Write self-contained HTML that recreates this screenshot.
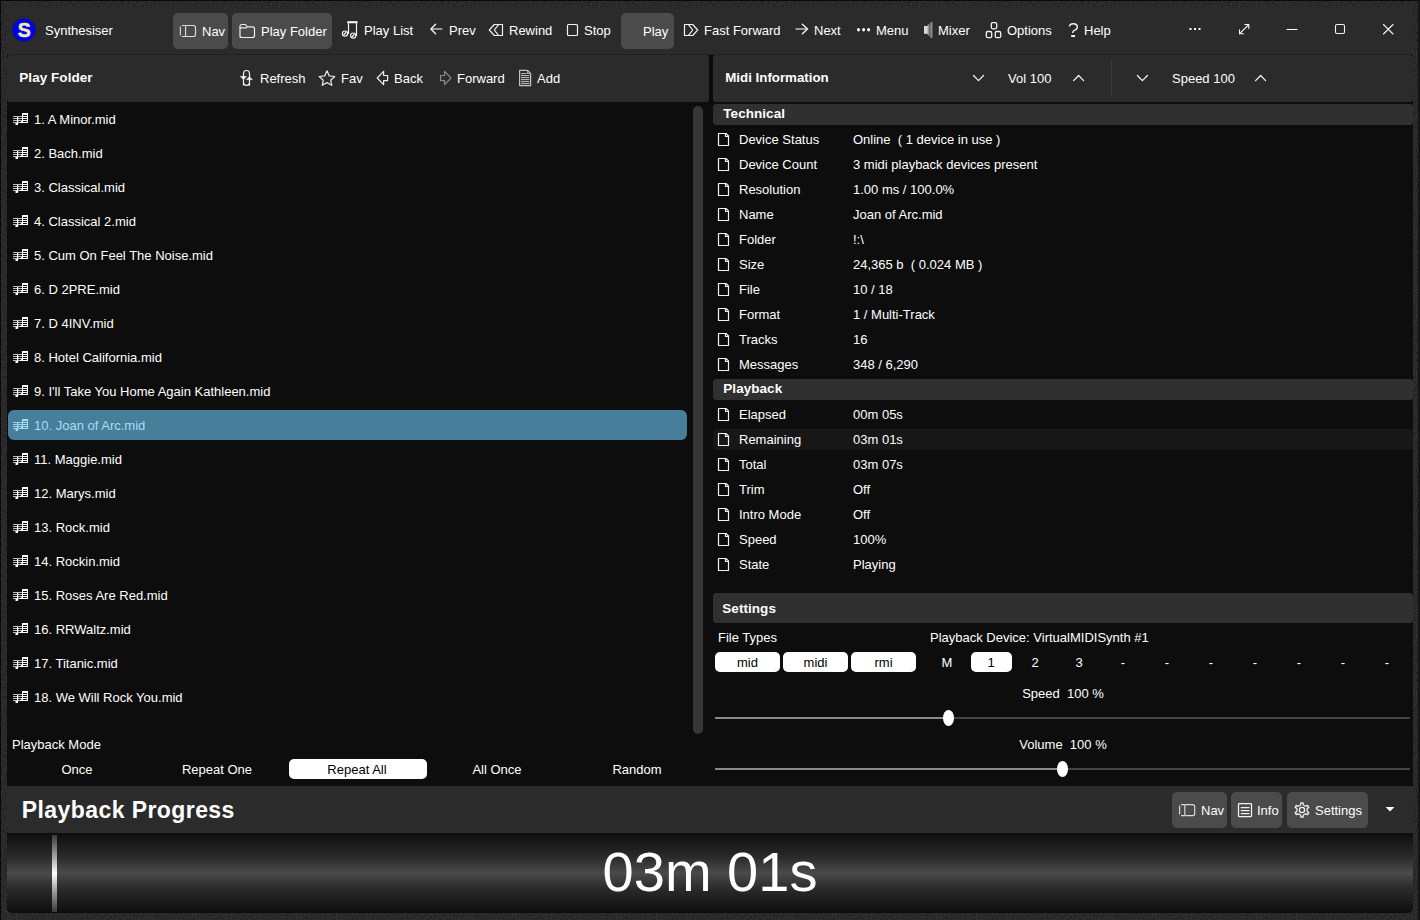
<!DOCTYPE html>
<html><head><meta charset="utf-8"><style>
html,body{margin:0;padding:0;background:#1d1d1d;}
body{width:1420px;height:920px;position:relative;overflow:hidden;font-family:"Liberation Sans", sans-serif;}
.t{position:absolute;white-space:nowrap;}
.b{position:absolute;}
.s{position:absolute;overflow:visible;}
</style></head><body>
<div class="b" style="left:0px;top:0px;width:1420px;height:920px;background:#262626;"></div>
<svg class="s" style="left:0;top:0" width="1420" height="920"><filter id="nz" x="0" y="0" width="100%" height="100%" color-interpolation-filters="sRGB"><feTurbulence type="fractalNoise" baseFrequency="0.8" numOctaves="1" seed="3"/><feColorMatrix values="0.22 0 0 0 0.055  0.22 0 0 0 0.055  0.22 0 0 0 0.055  0 0 0 0 1"/></filter><rect width="1420" height="920" filter="url(#nz)"/></svg>
<div class="b" style="left:0px;top:0px;width:1420px;height:1px;background:#0a0a0a;"></div>
<div class="b" style="left:0px;top:0px;width:1px;height:920px;background:#0a0a0a;"></div>
<div class="b" style="left:1418px;top:0px;width:2px;height:920px;background:#141414;"></div>
<div class="b" style="left:7px;top:7px;width:1406px;height:906px;background:#2b2b2b;"></div>
<div class="b" style="left:7px;top:54px;width:1406px;height:1px;background:#212121;"></div>
<div class="b" style="left:13.1px;top:18.6px;width:22px;height:22px;border-radius:50%;background:radial-gradient(circle,#0000f4 50%,#0000d0 85%,#0000a0 100%);box-shadow:0 0 1.5px 0.8px rgba(0,0,170,0.7);"></div>
<div class="t" style="left:17.8px;top:19.19px;font-size:19.5px;line-height:22.5px;font-weight:bold;color:#f2eea8;-webkit-text-stroke:0.5px #f2eea8;">S</div>
<div class="t" style="left:45px;top:22.50px;font-size:13px;line-height:16px;font-weight:normal;color:#fff;letter-spacing:0px;">Synthesiser</div>
<div class="b" style="left:173px;top:13px;width:55px;height:36px;background:#4b4b4b;border-radius:5px;"></div>
<div class="b" style="left:232px;top:13px;width:100px;height:36px;background:#4b4b4b;border-radius:5px;"></div>
<div class="b" style="left:621px;top:13px;width:53px;height:36px;background:#4b4b4b;border-radius:5px;"></div>
<div class="t" style="left:202px;top:23.50px;font-size:13px;line-height:16px;font-weight:normal;color:#fff;letter-spacing:0px;">Nav</div>
<div class="t" style="left:261px;top:23.50px;font-size:13px;line-height:16px;font-weight:normal;color:#fff;letter-spacing:0px;">Play Folder</div>
<div class="t" style="left:364px;top:22.50px;font-size:13px;line-height:16px;font-weight:normal;color:#fff;letter-spacing:0px;">Play List</div>
<div class="t" style="left:449px;top:22.50px;font-size:13px;line-height:16px;font-weight:normal;color:#fff;letter-spacing:0px;">Prev</div>
<div class="t" style="left:509px;top:22.50px;font-size:13px;line-height:16px;font-weight:normal;color:#fff;letter-spacing:0px;">Rewind</div>
<div class="t" style="left:584px;top:22.50px;font-size:13px;line-height:16px;font-weight:normal;color:#fff;letter-spacing:0px;">Stop</div>
<div class="t" style="left:643px;top:23.50px;font-size:13px;line-height:16px;font-weight:normal;color:#fff;letter-spacing:0px;">Play</div>
<div class="t" style="left:704px;top:22.50px;font-size:13px;line-height:16px;font-weight:normal;color:#fff;letter-spacing:0px;">Fast Forward</div>
<div class="t" style="left:814px;top:22.50px;font-size:13px;line-height:16px;font-weight:normal;color:#fff;letter-spacing:0px;">Next</div>
<div class="t" style="left:876px;top:22.50px;font-size:13px;line-height:16px;font-weight:normal;color:#fff;letter-spacing:0px;">Menu</div>
<div class="t" style="left:938px;top:22.50px;font-size:13px;line-height:16px;font-weight:normal;color:#fff;letter-spacing:0px;">Mixer</div>
<div class="t" style="left:1007px;top:22.50px;font-size:13px;line-height:16px;font-weight:normal;color:#fff;letter-spacing:0px;">Options</div>
<div class="t" style="left:1084px;top:22.50px;font-size:13px;line-height:16px;font-weight:normal;color:#fff;letter-spacing:0px;">Help</div>
<div class="b" style="left:7px;top:55px;width:1406px;height:731px;background:#0d0d0d;"></div>
<div class="b" style="left:7px;top:55px;width:702px;height:47px;background:#2b2b2b;border-radius:3px;"></div>
<div class="t" style="left:19.3px;top:70.27px;font-size:13.5px;line-height:16.5px;font-weight:bold;color:#fff;letter-spacing:0.05px;">Play Folder</div>
<div class="t" style="left:260px;top:70.50px;font-size:13px;line-height:16px;font-weight:normal;color:#fff;letter-spacing:0px;">Refresh</div>
<div class="t" style="left:341px;top:70.50px;font-size:13px;line-height:16px;font-weight:normal;color:#fff;letter-spacing:0px;">Fav</div>
<div class="t" style="left:394px;top:70.50px;font-size:13px;line-height:16px;font-weight:normal;color:#fff;letter-spacing:0px;">Back</div>
<div class="t" style="left:457px;top:70.50px;font-size:13px;line-height:16px;font-weight:normal;color:#fff;letter-spacing:0px;">Forward</div>
<div class="t" style="left:537px;top:70.50px;font-size:13px;line-height:16px;font-weight:normal;color:#fff;letter-spacing:0px;">Add</div>
<div class="b" style="left:709px;top:55px;width:4px;height:731px;background:#0b0b0b;"></div>
<div class="b" style="left:713px;top:55px;width:700px;height:47px;background:#2b2b2b;border-radius:3px;"></div>
<div class="t" style="left:725.3px;top:70.44px;font-size:13.3px;line-height:16.3px;font-weight:bold;color:#fff;">Midi Information</div>
<div class="t" style="left:1008px;top:70.50px;font-size:13px;line-height:16px;font-weight:normal;color:#fff;letter-spacing:0px;">Vol 100</div>
<div class="t" style="left:1172px;top:70.50px;font-size:13px;line-height:16px;font-weight:normal;color:#fff;letter-spacing:0px;">Speed 100</div>
<div class="b" style="left:1111px;top:60px;width:1px;height:36px;background:#3a3a3a;"></div>
<div class="b" style="left:7px;top:102px;width:1406px;height:684px;background:#0d0d0d;"></div>
<div class="b" style="left:709px;top:102px;width:4px;height:2px;background:#0b0b0b;"></div>
<div class="t" style="left:34px;top:111.50px;font-size:13px;line-height:16px;font-weight:normal;color:#fff;letter-spacing:0px;">1. A Minor.mid</div>
<div class="t" style="left:34px;top:145.50px;font-size:13px;line-height:16px;font-weight:normal;color:#fff;letter-spacing:0px;">2. Bach.mid</div>
<div class="t" style="left:34px;top:179.50px;font-size:13px;line-height:16px;font-weight:normal;color:#fff;letter-spacing:0px;">3. Classical.mid</div>
<div class="t" style="left:34px;top:213.50px;font-size:13px;line-height:16px;font-weight:normal;color:#fff;letter-spacing:0px;">4. Classical 2.mid</div>
<div class="t" style="left:34px;top:247.50px;font-size:13px;line-height:16px;font-weight:normal;color:#fff;letter-spacing:0px;">5. Cum On Feel The Noise.mid</div>
<div class="t" style="left:34px;top:281.50px;font-size:13px;line-height:16px;font-weight:normal;color:#fff;letter-spacing:0px;">6. D 2PRE.mid</div>
<div class="t" style="left:34px;top:315.50px;font-size:13px;line-height:16px;font-weight:normal;color:#fff;letter-spacing:0px;">7. D 4INV.mid</div>
<div class="t" style="left:34px;top:349.50px;font-size:13px;line-height:16px;font-weight:normal;color:#fff;letter-spacing:0px;">8. Hotel California.mid</div>
<div class="t" style="left:34px;top:383.50px;font-size:13px;line-height:16px;font-weight:normal;color:#fff;letter-spacing:0px;">9. I'll Take You Home Again Kathleen.mid</div>
<div class="b" style="left:8px;top:410px;width:679px;height:30px;background:#477f9b;border-radius:6px;"></div>
<div class="t" style="left:34px;top:417.50px;font-size:13px;line-height:16px;font-weight:normal;color:#a8dcf2;letter-spacing:0px;">10. Joan of Arc.mid</div>
<div class="t" style="left:34px;top:451.50px;font-size:13px;line-height:16px;font-weight:normal;color:#fff;letter-spacing:0px;">11. Maggie.mid</div>
<div class="t" style="left:34px;top:485.50px;font-size:13px;line-height:16px;font-weight:normal;color:#fff;letter-spacing:0px;">12. Marys.mid</div>
<div class="t" style="left:34px;top:519.50px;font-size:13px;line-height:16px;font-weight:normal;color:#fff;letter-spacing:0px;">13. Rock.mid</div>
<div class="t" style="left:34px;top:553.50px;font-size:13px;line-height:16px;font-weight:normal;color:#fff;letter-spacing:0px;">14. Rockin.mid</div>
<div class="t" style="left:34px;top:587.50px;font-size:13px;line-height:16px;font-weight:normal;color:#fff;letter-spacing:0px;">15. Roses Are Red.mid</div>
<div class="t" style="left:34px;top:621.50px;font-size:13px;line-height:16px;font-weight:normal;color:#fff;letter-spacing:0px;">16. RRWaltz.mid</div>
<div class="t" style="left:34px;top:655.50px;font-size:13px;line-height:16px;font-weight:normal;color:#fff;letter-spacing:0px;">17. Titanic.mid</div>
<div class="t" style="left:34px;top:689.50px;font-size:13px;line-height:16px;font-weight:normal;color:#fff;letter-spacing:0px;">18. We Will Rock You.mid</div>
<div class="b" style="left:693px;top:106px;width:10px;height:628px;background:#363636;border-radius:5px;"></div>
<div class="t" style="left:12px;top:736.50px;font-size:13px;line-height:16px;font-weight:normal;color:#fff;letter-spacing:0px;">Playback Mode</div>
<div class="t" style="left:-23.0px;width:200px;text-align:center;top:761.50px;font-size:13px;line-height:16px;font-weight:normal;color:#fff;letter-spacing:0px;">Once</div>
<div class="t" style="left:117.0px;width:200px;text-align:center;top:761.50px;font-size:13px;line-height:16px;font-weight:normal;color:#fff;letter-spacing:0px;">Repeat One</div>
<div class="b" style="left:289px;top:759px;width:138px;height:20px;background:#fff;border-radius:5px;"></div>
<div class="t" style="left:257.0px;width:200px;text-align:center;top:761.50px;font-size:13px;line-height:16px;font-weight:normal;color:#000;letter-spacing:0px;">Repeat All</div>
<div class="t" style="left:397.0px;width:200px;text-align:center;top:761.50px;font-size:13px;line-height:16px;font-weight:normal;color:#fff;letter-spacing:0px;">All Once</div>
<div class="t" style="left:537.0px;width:200px;text-align:center;top:761.50px;font-size:13px;line-height:16px;font-weight:normal;color:#fff;letter-spacing:0px;">Random</div>
<div class="b" style="left:713px;top:104px;width:699.5px;height:21px;background:#303030;border-radius:3px;"></div>
<div class="t" style="left:723.3px;top:106.07px;font-size:13.5px;line-height:16.5px;font-weight:bold;color:#fff;letter-spacing:0.05px;">Technical</div>
<div class="t" style="left:739px;top:131.50px;font-size:13px;line-height:16px;font-weight:normal;color:#fff;letter-spacing:0px;">Device Status</div>
<div class="t" style="left:853px;top:131.50px;font-size:13px;line-height:16px;font-weight:normal;color:#fff;letter-spacing:0px;">Online&nbsp; ( 1 device in use )</div>
<div class="t" style="left:739px;top:156.50px;font-size:13px;line-height:16px;font-weight:normal;color:#fff;letter-spacing:0px;">Device Count</div>
<div class="t" style="left:853px;top:156.50px;font-size:13px;line-height:16px;font-weight:normal;color:#fff;letter-spacing:0px;">3 midi playback devices present</div>
<div class="t" style="left:739px;top:181.50px;font-size:13px;line-height:16px;font-weight:normal;color:#fff;letter-spacing:0px;">Resolution</div>
<div class="t" style="left:853px;top:181.50px;font-size:13px;line-height:16px;font-weight:normal;color:#fff;letter-spacing:0px;">1.00 ms / 100.0%</div>
<div class="t" style="left:739px;top:206.50px;font-size:13px;line-height:16px;font-weight:normal;color:#fff;letter-spacing:0px;">Name</div>
<div class="t" style="left:853px;top:206.50px;font-size:13px;line-height:16px;font-weight:normal;color:#fff;letter-spacing:0px;">Joan of Arc.mid</div>
<div class="t" style="left:739px;top:231.50px;font-size:13px;line-height:16px;font-weight:normal;color:#fff;letter-spacing:0px;">Folder</div>
<div class="t" style="left:853px;top:231.50px;font-size:13px;line-height:16px;font-weight:normal;color:#fff;letter-spacing:0px;">!:\</div>
<div class="t" style="left:739px;top:256.50px;font-size:13px;line-height:16px;font-weight:normal;color:#fff;letter-spacing:0px;">Size</div>
<div class="t" style="left:853px;top:256.50px;font-size:13px;line-height:16px;font-weight:normal;color:#fff;letter-spacing:0px;">24,365 b&nbsp; ( 0.024 MB )</div>
<div class="t" style="left:739px;top:281.50px;font-size:13px;line-height:16px;font-weight:normal;color:#fff;letter-spacing:0px;">File</div>
<div class="t" style="left:853px;top:281.50px;font-size:13px;line-height:16px;font-weight:normal;color:#fff;letter-spacing:0px;">10 / 18</div>
<div class="t" style="left:739px;top:306.50px;font-size:13px;line-height:16px;font-weight:normal;color:#fff;letter-spacing:0px;">Format</div>
<div class="t" style="left:853px;top:306.50px;font-size:13px;line-height:16px;font-weight:normal;color:#fff;letter-spacing:0px;">1 / Multi-Track</div>
<div class="t" style="left:739px;top:331.50px;font-size:13px;line-height:16px;font-weight:normal;color:#fff;letter-spacing:0px;">Tracks</div>
<div class="t" style="left:853px;top:331.50px;font-size:13px;line-height:16px;font-weight:normal;color:#fff;letter-spacing:0px;">16</div>
<div class="t" style="left:739px;top:356.50px;font-size:13px;line-height:16px;font-weight:normal;color:#fff;letter-spacing:0px;">Messages</div>
<div class="t" style="left:853px;top:356.50px;font-size:13px;line-height:16px;font-weight:normal;color:#fff;letter-spacing:0px;">348 / 6,290</div>
<div class="b" style="left:713px;top:379px;width:699.5px;height:21px;background:#303030;border-radius:3px;"></div>
<div class="t" style="left:723.3px;top:381.07px;font-size:13.5px;line-height:16.5px;font-weight:bold;color:#fff;letter-spacing:0.05px;">Playback</div>
<div class="t" style="left:739px;top:406.50px;font-size:13px;line-height:16px;font-weight:normal;color:#fff;letter-spacing:0px;">Elapsed</div>
<div class="t" style="left:853px;top:406.50px;font-size:13px;line-height:16px;font-weight:normal;color:#fff;letter-spacing:0px;">00m 05s</div>
<div class="b" style="left:713px;top:429px;width:699.5px;height:21px;background:#171717;border-radius:3px;"></div>
<div class="t" style="left:739px;top:431.50px;font-size:13px;line-height:16px;font-weight:normal;color:#fff;letter-spacing:0px;">Remaining</div>
<div class="t" style="left:853px;top:431.50px;font-size:13px;line-height:16px;font-weight:normal;color:#fff;letter-spacing:0px;">03m 01s</div>
<div class="t" style="left:739px;top:456.50px;font-size:13px;line-height:16px;font-weight:normal;color:#fff;letter-spacing:0px;">Total</div>
<div class="t" style="left:853px;top:456.50px;font-size:13px;line-height:16px;font-weight:normal;color:#fff;letter-spacing:0px;">03m 07s</div>
<div class="t" style="left:739px;top:481.50px;font-size:13px;line-height:16px;font-weight:normal;color:#fff;letter-spacing:0px;">Trim</div>
<div class="t" style="left:853px;top:481.50px;font-size:13px;line-height:16px;font-weight:normal;color:#fff;letter-spacing:0px;">Off</div>
<div class="t" style="left:739px;top:506.50px;font-size:13px;line-height:16px;font-weight:normal;color:#fff;letter-spacing:0px;">Intro Mode</div>
<div class="t" style="left:853px;top:506.50px;font-size:13px;line-height:16px;font-weight:normal;color:#fff;letter-spacing:0px;">Off</div>
<div class="t" style="left:739px;top:531.50px;font-size:13px;line-height:16px;font-weight:normal;color:#fff;letter-spacing:0px;">Speed</div>
<div class="t" style="left:853px;top:531.50px;font-size:13px;line-height:16px;font-weight:normal;color:#fff;letter-spacing:0px;">100%</div>
<div class="t" style="left:739px;top:556.50px;font-size:13px;line-height:16px;font-weight:normal;color:#fff;letter-spacing:0px;">State</div>
<div class="t" style="left:853px;top:556.50px;font-size:13px;line-height:16px;font-weight:normal;color:#fff;letter-spacing:0px;">Playing</div>
<div class="b" style="left:713px;top:593px;width:699.5px;height:30px;background:#303030;border-radius:3px;"></div>
<div class="t" style="left:722.3px;top:600.57px;font-size:13.5px;line-height:16.5px;font-weight:bold;color:#fff;letter-spacing:0.05px;">Settings</div>

<div class="t" style="left:718px;top:629.50px;font-size:13px;line-height:16px;font-weight:normal;color:#fff;letter-spacing:0px;">File Types</div>
<div class="b" style="left:715px;top:652px;width:65px;height:20px;background:#fff;border-radius:5px;"></div>
<div class="t" style="left:647.5px;width:200px;text-align:center;top:654.50px;font-size:13px;line-height:16px;font-weight:normal;color:#000;letter-spacing:0px;">mid</div>
<div class="b" style="left:783px;top:652px;width:65px;height:20px;background:#fff;border-radius:5px;"></div>
<div class="t" style="left:715.5px;width:200px;text-align:center;top:654.50px;font-size:13px;line-height:16px;font-weight:normal;color:#000;letter-spacing:0px;">midi</div>
<div class="b" style="left:851px;top:652px;width:65px;height:20px;background:#fff;border-radius:5px;"></div>
<div class="t" style="left:783.5px;width:200px;text-align:center;top:654.50px;font-size:13px;line-height:16px;font-weight:normal;color:#000;letter-spacing:0px;">rmi</div>
<div class="t" style="left:930px;top:629.50px;font-size:13px;line-height:16px;font-weight:normal;color:#fff;letter-spacing:0px;">Playback Device: VirtualMIDISynth #1</div>
<div class="t" style="left:847.0px;width:200px;text-align:center;top:654.50px;font-size:13px;line-height:16px;font-weight:normal;color:#fff;letter-spacing:0px;">M</div>
<div class="b" style="left:971px;top:652px;width:41px;height:20px;background:#fff;border-radius:5px;"></div>
<div class="t" style="left:891.0px;width:200px;text-align:center;top:654.50px;font-size:13px;line-height:16px;font-weight:normal;color:#000;letter-spacing:0px;">1</div>
<div class="t" style="left:935.0px;width:200px;text-align:center;top:654.50px;font-size:13px;line-height:16px;font-weight:normal;color:#fff;letter-spacing:0px;">2</div>
<div class="t" style="left:979.0px;width:200px;text-align:center;top:654.50px;font-size:13px;line-height:16px;font-weight:normal;color:#fff;letter-spacing:0px;">3</div>
<div class="t" style="left:1023.0px;width:200px;text-align:center;top:654.50px;font-size:13px;line-height:16px;font-weight:normal;color:#fff;letter-spacing:0px;">-</div>
<div class="t" style="left:1067.0px;width:200px;text-align:center;top:654.50px;font-size:13px;line-height:16px;font-weight:normal;color:#fff;letter-spacing:0px;">-</div>
<div class="t" style="left:1111.0px;width:200px;text-align:center;top:654.50px;font-size:13px;line-height:16px;font-weight:normal;color:#fff;letter-spacing:0px;">-</div>
<div class="t" style="left:1155.0px;width:200px;text-align:center;top:654.50px;font-size:13px;line-height:16px;font-weight:normal;color:#fff;letter-spacing:0px;">-</div>
<div class="t" style="left:1199.0px;width:200px;text-align:center;top:654.50px;font-size:13px;line-height:16px;font-weight:normal;color:#fff;letter-spacing:0px;">-</div>
<div class="t" style="left:1243.0px;width:200px;text-align:center;top:654.50px;font-size:13px;line-height:16px;font-weight:normal;color:#fff;letter-spacing:0px;">-</div>
<div class="t" style="left:1287.0px;width:200px;text-align:center;top:654.50px;font-size:13px;line-height:16px;font-weight:normal;color:#fff;letter-spacing:0px;">-</div>
<div class="t" style="left:963.0px;width:200px;text-align:center;top:685.50px;font-size:13px;line-height:16px;font-weight:normal;color:#fff;letter-spacing:0px;">Speed&nbsp; 100 %</div>
<div class="b" style="left:715px;top:717px;width:233px;height:2px;background:#8a8a8a;"></div>
<div class="b" style="left:948px;top:717px;width:462px;height:2px;background:#444;"></div>
<div class="b" style="left:943px;top:710px;width:11px;height:16px;background:#fff;border-radius:50%;"></div>
<div class="t" style="left:963.0px;width:200px;text-align:center;top:736.50px;font-size:13px;line-height:16px;font-weight:normal;color:#fff;letter-spacing:0px;">Volume&nbsp; 100 %</div>
<div class="b" style="left:715px;top:768px;width:347px;height:2px;background:#8a8a8a;"></div>
<div class="b" style="left:1062px;top:768px;width:348px;height:2px;background:#444;"></div>
<div class="b" style="left:1057px;top:761px;width:11px;height:16px;background:#fff;border-radius:50%;"></div>
<div class="b" style="left:7px;top:786px;width:1406px;height:47px;background:#2b2b2b;border-radius:5px 5px 0 0;"></div>
<div class="t" style="left:21.8px;top:797.03px;font-size:23px;line-height:26px;font-weight:bold;color:#fff;letter-spacing:0.42px;">Playback Progress</div>
<div class="b" style="left:1172px;top:792px;width:55px;height:36px;background:#4b4b4b;border-radius:5px;"></div>
<div class="t" style="left:1201px;top:802.50px;font-size:13px;line-height:16px;font-weight:normal;color:#fff;letter-spacing:0px;">Nav</div>
<div class="b" style="left:1231px;top:792px;width:51px;height:36px;background:#4b4b4b;border-radius:5px;"></div>
<div class="t" style="left:1257px;top:802.50px;font-size:13px;line-height:16px;font-weight:normal;color:#fff;letter-spacing:0px;">Info</div>
<div class="b" style="left:1287px;top:792px;width:81px;height:36px;background:#4b4b4b;border-radius:5px;"></div>
<div class="t" style="left:1315px;top:802.50px;font-size:13px;line-height:16px;font-weight:normal;color:#fff;letter-spacing:0px;">Settings</div>
<div class="b" style="left:7px;top:833px;width:1406px;height:80px;background:linear-gradient(#0d0d0d,#2a2a2a 30%,#4a4a4a 50%,#2a2a2a 70%,#0d0d0d);border-radius:0 0 5px 5px;"></div>
<div class="b" style="left:52px;top:835px;width:5px;height:77px;background:linear-gradient(#3a3a3a,#aaa 30%,#fff 50%,#aaa 70%,#3a3a3a);"></div>
<div class="t" style="left:510.0px;width:400px;text-align:center;top:842.40px;font-size:56px;line-height:59px;font-weight:normal;color:#fff;">03m 01s</div>
<svg class="s" style="left:178px;top:23px" width="20" height="16" viewBox="178 23 20 16" fill="none" stroke="#dcdcdc" stroke-width="1.15" stroke-linejoin="round" stroke-linecap="round"><path d="M180.4 27.0 V34.8"/><path d="M182.20000000000002 25.5 H184.8"/><path d="M182.20000000000002 36.5 H184.8"/><path d="M185.6 25.5 V36.5"/><path d="M186.4 25.5 H193.4 Q195.5 25.5 195.5 27.6 V34.4 Q195.5 36.5 193.4 36.5 H186.4"/></svg>
<svg class="s" style="left:236px;top:20px" width="22" height="20" viewBox="236 20 22 20" fill="none" stroke="#f0f0f0" stroke-width="1.2" stroke-linejoin="round" stroke-linecap="round"><path d="M240 37 V26.5 Q240 24.5 242 24.5 H245.5 L247.3 26.8 H252.5 Q254.5 26.8 254.5 28.8 V35.5 Q254.5 37.5 252.5 37.5 H242 Q240 37.5 240 35.5"/><path d="M240.3 27.8 H246.5"/></svg>
<svg class="s" style="left:338px;top:18px" width="24" height="24" viewBox="338 18 24 24" fill="none" stroke="#f2f2f2" stroke-width="1.2" stroke-linejoin="round" stroke-linecap="round"><path d="M348.5 33.5 V22 H356.5 V35.5"/><path d="M348 22.3 H356.8" stroke-width="2"/><circle cx="345" cy="33.6" r="2.6"/><circle cx="353.2" cy="35.6" r="2.6"/><path d="M344 34.5 L346 32.5 M352.2 36.5 L354.2 34.5"/></svg>
<svg class="s" style="left:426px;top:20px" width="20" height="18" viewBox="426 20 20 18" fill="none" stroke="#f2f2f2" stroke-width="1.2" stroke-linejoin="round" stroke-linecap="round"><path d="M441.8 29 H431.5" stroke="#bdbdbd" stroke-width="1.4"/><path d="M435.6 24.3 L430.9 29 L435.6 33.7" stroke-width="1.4"/></svg>
<svg class="s" style="left:486px;top:20px" width="20" height="18" viewBox="486 20 20 18" fill="none" stroke="#f2f2f2" stroke-width="1.2" stroke-linejoin="round" stroke-linecap="round"><path d="M494.3 24.5 H502.5 V35.5 H494.3 L489.3 30 Z"/><path d="M498.3 24.8 L494.3 30 L498.3 35.2"/></svg>
<svg class="s" style="left:564px;top:20px" width="18" height="18" viewBox="564 20 18 18" fill="none" stroke="#f2f2f2" stroke-width="1.2" stroke-linejoin="round" stroke-linecap="round"><rect x="567.5" y="24.5" width="10" height="11" rx="1"/></svg>
<svg class="s" style="left:680px;top:20px" width="20" height="18" viewBox="680 20 20 18" fill="none" stroke="#f2f2f2" stroke-width="1.2" stroke-linejoin="round" stroke-linecap="round"><path d="M692.7 24.5 H684.5 V35.5 H692.7 L697.7 30 Z"/><path d="M688.7 24.8 L692.7 30 L688.7 35.2"/></svg>
<svg class="s" style="left:792px;top:20px" width="20" height="18" viewBox="792 20 20 18" fill="none" stroke="#f2f2f2" stroke-width="1.2" stroke-linejoin="round" stroke-linecap="round"><path d="M796 29 H807" stroke="#bdbdbd" stroke-width="1.4"/><path d="M802.4 24.3 L807.5 29 L802.4 33.7" stroke-width="1.4"/></svg>
<svg class="s" style="left:852px;top:24px" width="22" height="12" viewBox="852 24 22 12" fill="none" stroke="#f2f2f2" stroke-width="1.2" stroke-linejoin="round" stroke-linecap="round"><ellipse cx="858.5" cy="29.8" rx="1.5" ry="1.8" fill="#fff" stroke="none"/><ellipse cx="863.6" cy="29.8" rx="1.5" ry="1.8" fill="#fff" stroke="none"/><ellipse cx="868.6" cy="29.8" rx="1.5" ry="1.8" fill="#fff" stroke="none"/></svg>
<svg class="s" style="left:920px;top:18px" width="16" height="24" viewBox="920 18 16 24"><defs><linearGradient id="spk" x1="0" y1="0" x2="1" y2="0"><stop offset="0" stop-color="#d0d0d0"/><stop offset="0.55" stop-color="#5a5a5a"/><stop offset="1" stop-color="#b0b0b0"/></linearGradient></defs><rect x="924" y="26" width="3.2" height="7.8" fill="#d8d8d8"/><path d="M927 26 L931 22 H932.3 V38 H931 L927 33.8 Z" fill="url(#spk)"/></svg>
<svg class="s" style="left:982px;top:18px" width="22" height="24" viewBox="982 18 22 24" fill="none" stroke="#f2f2f2" stroke-width="1.3" stroke-linejoin="round" stroke-linecap="round"><rect x="991.3" y="22.6" width="5.4" height="6.2" rx="1.5"/><rect x="986.3" y="31.5" width="5.4" height="6.2" rx="1.5"/><rect x="995.3" y="31.5" width="5.4" height="6.2" rx="1.5"/></svg>
<svg class="s" style="left:1064px;top:18px" width="18" height="24" viewBox="1064 18 18 24" fill="none" stroke="#f2f2f2" stroke-width="1.2" stroke-linejoin="round" stroke-linecap="round"><path d="M1069.5 26.5 Q1069.5 23.7 1073.3 23.7 Q1077.3 23.7 1077.3 27 Q1077.3 29.3 1074.5 30.3 Q1072.6 31 1072.6 33" stroke-width="1.4" stroke-linecap="butt"/><rect x="1071.2" y="35.1" width="3.8" height="1.9" fill="#fff" stroke="none"/></svg>
<svg class="s" style="left:1186px;top:26px" width="18" height="8" viewBox="1186 26 18 8" fill="none" stroke="#f2f2f2" stroke-width="1.2" stroke-linejoin="round" stroke-linecap="round"><rect x="1189.5" y="28" width="2" height="2" fill="#fff" stroke="none"/><rect x="1194" y="28" width="2" height="2" fill="#fff" stroke="none"/><rect x="1198.5" y="28" width="2" height="2" fill="#fff" stroke="none"/></svg>
<svg class="s" style="left:1236px;top:21px" width="16" height="16" viewBox="1236 21 16 16" fill="none" stroke="#f2f2f2" stroke-width="1.1" stroke-linejoin="round" stroke-linecap="round"><path d="M1239.5 33.8 L1248.8 24.5 M1244.8 24.5 H1248.8 V28.5 M1239.5 29.8 V33.8 H1243.5"/></svg>
<svg class="s" style="left:1284px;top:26px" width="16" height="8" viewBox="1284 26 16 8" fill="none" stroke="#fff" stroke-width="1.1" stroke-linejoin="round" stroke-linecap="round"><path d="M1287 29.5 H1297"/></svg>
<svg class="s" style="left:1332px;top:21px" width="16" height="16" viewBox="1332 21 16 16" fill="none" stroke="#f2f2f2" stroke-width="1.1" stroke-linejoin="round" stroke-linecap="round"><rect x="1335.5" y="24.5" width="9" height="9" rx="1.5"/></svg>
<svg class="s" style="left:1380px;top:21px" width="16" height="16" viewBox="1380 21 16 16" fill="none" stroke="#f2f2f2" stroke-width="1.1" stroke-linejoin="round" stroke-linecap="round"><path d="M1383.5 24.5 L1393 34 M1393 24.5 L1383.5 34"/></svg>
<svg class="s" style="left:237px;top:66px" width="20" height="24" viewBox="237 66 20 24" fill="none" stroke="#f2f2f2" stroke-width="1.2" stroke-linejoin="round" stroke-linecap="round"><path d="M243.5 85 V74 Q243.5 70.5 246.5 70.5 Q249.5 70.5 249.5 74 V85.3 M243.5 82 Q243.5 85.3 246.5 85.3 Q249.5 85.3 249.5 82"/><path d="M240.6 76.6 H246.4 L243.5 79.2 Z M246.6 79.6 H252.4 L249.5 77 Z" fill="#fff" stroke-width="0.6"/></svg>
<svg class="s" style="left:316px;top:66px" width="22" height="24" viewBox="316 66 22 24" fill="none" stroke="#e6e6e6" stroke-width="1.25" stroke-linejoin="round" stroke-linecap="round"><path d="M327 70.8 L329.3 75.9 L334.8 76.5 L330.7 80.2 L331.8 85.3 L327 82.6 L322.2 85.3 L323.3 80.2 L319.2 76.5 L324.7 75.9 Z"/></svg>
<svg class="s" style="left:372px;top:66px" width="20" height="24" viewBox="372 66 20 24" fill="none" stroke="#f2f2f2" stroke-width="1.2" stroke-linejoin="round" stroke-linecap="round"><path d="M377.2 78 L383.6 71.3 V75.5 H387.6 V80.6 H383.6 V84.7 Z"/></svg>
<svg class="s" style="left:436px;top:66px" width="20" height="24" viewBox="436 66 20 24" fill="none" stroke="#8a8a8a" stroke-width="1.2" stroke-linejoin="round" stroke-linecap="round"><path d="M451 78 L444.6 71.3 V75.5 H440.6 V80.6 H444.6 V84.7 Z"/></svg>
<svg class="s" style="left:514px;top:66px" width="20" height="24" viewBox="514 66 20 24" fill="none" stroke="#f2f2f2" stroke-width="1.2" stroke-linejoin="round" stroke-linecap="round"><path d="M519.6 70.4 H527.6 L530.6 73.4 V85.6 H519.6 Z" stroke="#c4c4c4"/><path d="M527.6 70.6 V73.4 H530.4" stroke="#aaa"/><path d="M521.5 73.6 H526 M521.5 75.6 H529 M521.5 77.6 H529 M521.5 79.6 H529 M521.5 81.6 H529 M521.5 83.6 H529" stroke="#c4c4c4" stroke-width="1"/></svg>
<svg class="s" style="left:970px;top:68px" width="16" height="20" viewBox="970 68 16 20" fill="none" stroke="#f2f2f2" stroke-width="1.3" stroke-linejoin="round" stroke-linecap="round"><path d="M973.5 75.5 L978.5 80.6 L983.5 75.5"/></svg>
<svg class="s" style="left:1070px;top:68px" width="16" height="20" viewBox="1070 68 16 20" fill="none" stroke="#f2f2f2" stroke-width="1.3" stroke-linejoin="round" stroke-linecap="round"><path d="M1073.6 80.6 L1078.6 75.5 L1083.6 80.6"/></svg>
<svg class="s" style="left:1134px;top:68px" width="16" height="20" viewBox="1134 68 16 20" fill="none" stroke="#f2f2f2" stroke-width="1.3" stroke-linejoin="round" stroke-linecap="round"><path d="M1137.4 75.5 L1142.4 80.6 L1147.4 75.5"/></svg>
<svg class="s" style="left:1252px;top:68px" width="16" height="20" viewBox="1252 68 16 20" fill="none" stroke="#f2f2f2" stroke-width="1.3" stroke-linejoin="round" stroke-linecap="round"><path d="M1255.6 80.6 L1260.6 75.5 L1265.6 80.6"/></svg>
<svg class="s" style="left:1177px;top:802px" width="20" height="16" viewBox="1177 802 20 16" fill="none" stroke="#dcdcdc" stroke-width="1.15" stroke-linejoin="round" stroke-linecap="round"><path d="M1179.6 806.1 V813.9"/><path d="M1181.3999999999999 804.6 H1184.0"/><path d="M1181.3999999999999 815.6 H1184.0"/><path d="M1184.8 804.6 V815.6"/><path d="M1185.6 804.6 H1192.6 Q1194.6999999999998 804.6 1194.6999999999998 806.7 V813.5 Q1194.6999999999998 815.6 1192.6 815.6 H1185.6"/></svg>
<svg class="s" style="left:1234px;top:800px" width="22" height="20" viewBox="1234 800 22 20" fill="none" stroke="#f2f2f2" stroke-width="1.25" stroke-linejoin="round" stroke-linecap="round"><rect x="1238.5" y="803.5" width="13" height="13" rx="0.8"/><path d="M1241.2 807.5 H1249 M1241.2 810.5 H1249 M1241.2 813.5 H1249"/></svg>
<svg class="s" style="left:1292px;top:799px" width="22" height="22" viewBox="1292 799 22 22" fill="none" stroke="#f2f2f2" stroke-width="1.25" stroke-linejoin="round" stroke-linecap="round"><path d="M1299.97 805.43 L1300.74 804.54 L1300.86 802.79 L1303.14 802.79 L1303.26 804.54 L1304.03 805.43 L1304.94 805.95 L1306.10 806.18 L1307.67 805.41 L1308.82 807.38 L1307.36 808.36 L1306.97 809.48 L1306.97 810.52 L1307.36 811.64 L1308.82 812.62 L1307.67 814.59 L1306.10 813.82 L1304.94 814.05 L1304.03 814.57 L1303.26 815.46 L1303.14 817.21 L1300.86 817.21 L1300.74 815.46 L1299.97 814.57 L1299.06 814.05 L1297.90 813.82 L1296.33 814.59 L1295.18 812.62 L1296.64 811.64 L1297.03 810.52 L1297.03 809.48 L1296.64 808.36 L1295.18 807.38 L1296.33 805.41 L1297.90 806.18 L1299.06 805.95 Z"/><circle cx="1302" cy="810" r="2.6"/></svg>
<svg class="s" style="left:1380px;top:800px" width="20" height="16" viewBox="1380 800 20 16" fill="none" stroke="#f2f2f2" stroke-width="1.2" stroke-linejoin="round" stroke-linecap="round"><path d="M1385.6 806.9 H1394.4 L1390 811.6 Z" fill="#fff" stroke="none"/></svg>
<svg class="s" style="left:13px;top:113px" width="16" height="13" viewBox="13 113 16 13"><rect x="13" y="116" width="9" height="1" fill="#bdbdbd"/><rect x="13" y="118" width="9" height="1" fill="#bdbdbd"/><rect x="13" y="120" width="9" height="1" fill="#bdbdbd"/><rect x="13" y="122" width="9" height="1" fill="#bdbdbd"/><rect x="22" y="113" width="6" height="10" fill="#ffffff"/><rect x="23" y="115" width="4" height="1" fill="#0d0d0d"/><rect x="23" y="117" width="4" height="1" fill="#0d0d0d"/><rect x="23" y="119" width="4" height="1" fill="#0d0d0d"/><rect x="23" y="121" width="4" height="1" fill="#0d0d0d"/><rect x="17" y="117" width="1.2" height="7" fill="#ffffff"/><rect x="15.5" y="123" width="2.5" height="2" fill="#ffffff"/><path d="M19.5 123 L22 120.5 V123 Z" fill="#ffffff"/><path d="M25.5 123 L28 120.5 V123 Z" fill="#ffffff"/></svg>
<svg class="s" style="left:13px;top:147px" width="16" height="13" viewBox="13 147 16 13"><rect x="13" y="150" width="9" height="1" fill="#bdbdbd"/><rect x="13" y="152" width="9" height="1" fill="#bdbdbd"/><rect x="13" y="154" width="9" height="1" fill="#bdbdbd"/><rect x="13" y="156" width="9" height="1" fill="#bdbdbd"/><rect x="22" y="147" width="6" height="10" fill="#ffffff"/><rect x="23" y="149" width="4" height="1" fill="#0d0d0d"/><rect x="23" y="151" width="4" height="1" fill="#0d0d0d"/><rect x="23" y="153" width="4" height="1" fill="#0d0d0d"/><rect x="23" y="155" width="4" height="1" fill="#0d0d0d"/><rect x="17" y="151" width="1.2" height="7" fill="#ffffff"/><rect x="15.5" y="157" width="2.5" height="2" fill="#ffffff"/><path d="M19.5 157 L22 154.5 V157 Z" fill="#ffffff"/><path d="M25.5 157 L28 154.5 V157 Z" fill="#ffffff"/></svg>
<svg class="s" style="left:13px;top:181px" width="16" height="13" viewBox="13 181 16 13"><rect x="13" y="184" width="9" height="1" fill="#bdbdbd"/><rect x="13" y="186" width="9" height="1" fill="#bdbdbd"/><rect x="13" y="188" width="9" height="1" fill="#bdbdbd"/><rect x="13" y="190" width="9" height="1" fill="#bdbdbd"/><rect x="22" y="181" width="6" height="10" fill="#ffffff"/><rect x="23" y="183" width="4" height="1" fill="#0d0d0d"/><rect x="23" y="185" width="4" height="1" fill="#0d0d0d"/><rect x="23" y="187" width="4" height="1" fill="#0d0d0d"/><rect x="23" y="189" width="4" height="1" fill="#0d0d0d"/><rect x="17" y="185" width="1.2" height="7" fill="#ffffff"/><rect x="15.5" y="191" width="2.5" height="2" fill="#ffffff"/><path d="M19.5 191 L22 188.5 V191 Z" fill="#ffffff"/><path d="M25.5 191 L28 188.5 V191 Z" fill="#ffffff"/></svg>
<svg class="s" style="left:13px;top:215px" width="16" height="13" viewBox="13 215 16 13"><rect x="13" y="218" width="9" height="1" fill="#bdbdbd"/><rect x="13" y="220" width="9" height="1" fill="#bdbdbd"/><rect x="13" y="222" width="9" height="1" fill="#bdbdbd"/><rect x="13" y="224" width="9" height="1" fill="#bdbdbd"/><rect x="22" y="215" width="6" height="10" fill="#ffffff"/><rect x="23" y="217" width="4" height="1" fill="#0d0d0d"/><rect x="23" y="219" width="4" height="1" fill="#0d0d0d"/><rect x="23" y="221" width="4" height="1" fill="#0d0d0d"/><rect x="23" y="223" width="4" height="1" fill="#0d0d0d"/><rect x="17" y="219" width="1.2" height="7" fill="#ffffff"/><rect x="15.5" y="225" width="2.5" height="2" fill="#ffffff"/><path d="M19.5 225 L22 222.5 V225 Z" fill="#ffffff"/><path d="M25.5 225 L28 222.5 V225 Z" fill="#ffffff"/></svg>
<svg class="s" style="left:13px;top:249px" width="16" height="13" viewBox="13 249 16 13"><rect x="13" y="252" width="9" height="1" fill="#bdbdbd"/><rect x="13" y="254" width="9" height="1" fill="#bdbdbd"/><rect x="13" y="256" width="9" height="1" fill="#bdbdbd"/><rect x="13" y="258" width="9" height="1" fill="#bdbdbd"/><rect x="22" y="249" width="6" height="10" fill="#ffffff"/><rect x="23" y="251" width="4" height="1" fill="#0d0d0d"/><rect x="23" y="253" width="4" height="1" fill="#0d0d0d"/><rect x="23" y="255" width="4" height="1" fill="#0d0d0d"/><rect x="23" y="257" width="4" height="1" fill="#0d0d0d"/><rect x="17" y="253" width="1.2" height="7" fill="#ffffff"/><rect x="15.5" y="259" width="2.5" height="2" fill="#ffffff"/><path d="M19.5 259 L22 256.5 V259 Z" fill="#ffffff"/><path d="M25.5 259 L28 256.5 V259 Z" fill="#ffffff"/></svg>
<svg class="s" style="left:13px;top:283px" width="16" height="13" viewBox="13 283 16 13"><rect x="13" y="286" width="9" height="1" fill="#bdbdbd"/><rect x="13" y="288" width="9" height="1" fill="#bdbdbd"/><rect x="13" y="290" width="9" height="1" fill="#bdbdbd"/><rect x="13" y="292" width="9" height="1" fill="#bdbdbd"/><rect x="22" y="283" width="6" height="10" fill="#ffffff"/><rect x="23" y="285" width="4" height="1" fill="#0d0d0d"/><rect x="23" y="287" width="4" height="1" fill="#0d0d0d"/><rect x="23" y="289" width="4" height="1" fill="#0d0d0d"/><rect x="23" y="291" width="4" height="1" fill="#0d0d0d"/><rect x="17" y="287" width="1.2" height="7" fill="#ffffff"/><rect x="15.5" y="293" width="2.5" height="2" fill="#ffffff"/><path d="M19.5 293 L22 290.5 V293 Z" fill="#ffffff"/><path d="M25.5 293 L28 290.5 V293 Z" fill="#ffffff"/></svg>
<svg class="s" style="left:13px;top:317px" width="16" height="13" viewBox="13 317 16 13"><rect x="13" y="320" width="9" height="1" fill="#bdbdbd"/><rect x="13" y="322" width="9" height="1" fill="#bdbdbd"/><rect x="13" y="324" width="9" height="1" fill="#bdbdbd"/><rect x="13" y="326" width="9" height="1" fill="#bdbdbd"/><rect x="22" y="317" width="6" height="10" fill="#ffffff"/><rect x="23" y="319" width="4" height="1" fill="#0d0d0d"/><rect x="23" y="321" width="4" height="1" fill="#0d0d0d"/><rect x="23" y="323" width="4" height="1" fill="#0d0d0d"/><rect x="23" y="325" width="4" height="1" fill="#0d0d0d"/><rect x="17" y="321" width="1.2" height="7" fill="#ffffff"/><rect x="15.5" y="327" width="2.5" height="2" fill="#ffffff"/><path d="M19.5 327 L22 324.5 V327 Z" fill="#ffffff"/><path d="M25.5 327 L28 324.5 V327 Z" fill="#ffffff"/></svg>
<svg class="s" style="left:13px;top:351px" width="16" height="13" viewBox="13 351 16 13"><rect x="13" y="354" width="9" height="1" fill="#bdbdbd"/><rect x="13" y="356" width="9" height="1" fill="#bdbdbd"/><rect x="13" y="358" width="9" height="1" fill="#bdbdbd"/><rect x="13" y="360" width="9" height="1" fill="#bdbdbd"/><rect x="22" y="351" width="6" height="10" fill="#ffffff"/><rect x="23" y="353" width="4" height="1" fill="#0d0d0d"/><rect x="23" y="355" width="4" height="1" fill="#0d0d0d"/><rect x="23" y="357" width="4" height="1" fill="#0d0d0d"/><rect x="23" y="359" width="4" height="1" fill="#0d0d0d"/><rect x="17" y="355" width="1.2" height="7" fill="#ffffff"/><rect x="15.5" y="361" width="2.5" height="2" fill="#ffffff"/><path d="M19.5 361 L22 358.5 V361 Z" fill="#ffffff"/><path d="M25.5 361 L28 358.5 V361 Z" fill="#ffffff"/></svg>
<svg class="s" style="left:13px;top:385px" width="16" height="13" viewBox="13 385 16 13"><rect x="13" y="388" width="9" height="1" fill="#bdbdbd"/><rect x="13" y="390" width="9" height="1" fill="#bdbdbd"/><rect x="13" y="392" width="9" height="1" fill="#bdbdbd"/><rect x="13" y="394" width="9" height="1" fill="#bdbdbd"/><rect x="22" y="385" width="6" height="10" fill="#ffffff"/><rect x="23" y="387" width="4" height="1" fill="#0d0d0d"/><rect x="23" y="389" width="4" height="1" fill="#0d0d0d"/><rect x="23" y="391" width="4" height="1" fill="#0d0d0d"/><rect x="23" y="393" width="4" height="1" fill="#0d0d0d"/><rect x="17" y="389" width="1.2" height="7" fill="#ffffff"/><rect x="15.5" y="395" width="2.5" height="2" fill="#ffffff"/><path d="M19.5 395 L22 392.5 V395 Z" fill="#ffffff"/><path d="M25.5 395 L28 392.5 V395 Z" fill="#ffffff"/></svg>
<svg class="s" style="left:13px;top:419px" width="16" height="13" viewBox="13 419 16 13"><rect x="13" y="422" width="9" height="1" fill="#9fd0e6"/><rect x="13" y="424" width="9" height="1" fill="#9fd0e6"/><rect x="13" y="426" width="9" height="1" fill="#9fd0e6"/><rect x="13" y="428" width="9" height="1" fill="#9fd0e6"/><rect x="22" y="419" width="6" height="10" fill="#a8dcf2"/><rect x="23" y="421" width="4" height="1" fill="#477f9b"/><rect x="23" y="423" width="4" height="1" fill="#477f9b"/><rect x="23" y="425" width="4" height="1" fill="#477f9b"/><rect x="23" y="427" width="4" height="1" fill="#477f9b"/><rect x="17" y="423" width="1.2" height="7" fill="#a8dcf2"/><rect x="15.5" y="429" width="2.5" height="2" fill="#a8dcf2"/><path d="M19.5 429 L22 426.5 V429 Z" fill="#a8dcf2"/><path d="M25.5 429 L28 426.5 V429 Z" fill="#a8dcf2"/></svg>
<svg class="s" style="left:13px;top:453px" width="16" height="13" viewBox="13 453 16 13"><rect x="13" y="456" width="9" height="1" fill="#bdbdbd"/><rect x="13" y="458" width="9" height="1" fill="#bdbdbd"/><rect x="13" y="460" width="9" height="1" fill="#bdbdbd"/><rect x="13" y="462" width="9" height="1" fill="#bdbdbd"/><rect x="22" y="453" width="6" height="10" fill="#ffffff"/><rect x="23" y="455" width="4" height="1" fill="#0d0d0d"/><rect x="23" y="457" width="4" height="1" fill="#0d0d0d"/><rect x="23" y="459" width="4" height="1" fill="#0d0d0d"/><rect x="23" y="461" width="4" height="1" fill="#0d0d0d"/><rect x="17" y="457" width="1.2" height="7" fill="#ffffff"/><rect x="15.5" y="463" width="2.5" height="2" fill="#ffffff"/><path d="M19.5 463 L22 460.5 V463 Z" fill="#ffffff"/><path d="M25.5 463 L28 460.5 V463 Z" fill="#ffffff"/></svg>
<svg class="s" style="left:13px;top:487px" width="16" height="13" viewBox="13 487 16 13"><rect x="13" y="490" width="9" height="1" fill="#bdbdbd"/><rect x="13" y="492" width="9" height="1" fill="#bdbdbd"/><rect x="13" y="494" width="9" height="1" fill="#bdbdbd"/><rect x="13" y="496" width="9" height="1" fill="#bdbdbd"/><rect x="22" y="487" width="6" height="10" fill="#ffffff"/><rect x="23" y="489" width="4" height="1" fill="#0d0d0d"/><rect x="23" y="491" width="4" height="1" fill="#0d0d0d"/><rect x="23" y="493" width="4" height="1" fill="#0d0d0d"/><rect x="23" y="495" width="4" height="1" fill="#0d0d0d"/><rect x="17" y="491" width="1.2" height="7" fill="#ffffff"/><rect x="15.5" y="497" width="2.5" height="2" fill="#ffffff"/><path d="M19.5 497 L22 494.5 V497 Z" fill="#ffffff"/><path d="M25.5 497 L28 494.5 V497 Z" fill="#ffffff"/></svg>
<svg class="s" style="left:13px;top:521px" width="16" height="13" viewBox="13 521 16 13"><rect x="13" y="524" width="9" height="1" fill="#bdbdbd"/><rect x="13" y="526" width="9" height="1" fill="#bdbdbd"/><rect x="13" y="528" width="9" height="1" fill="#bdbdbd"/><rect x="13" y="530" width="9" height="1" fill="#bdbdbd"/><rect x="22" y="521" width="6" height="10" fill="#ffffff"/><rect x="23" y="523" width="4" height="1" fill="#0d0d0d"/><rect x="23" y="525" width="4" height="1" fill="#0d0d0d"/><rect x="23" y="527" width="4" height="1" fill="#0d0d0d"/><rect x="23" y="529" width="4" height="1" fill="#0d0d0d"/><rect x="17" y="525" width="1.2" height="7" fill="#ffffff"/><rect x="15.5" y="531" width="2.5" height="2" fill="#ffffff"/><path d="M19.5 531 L22 528.5 V531 Z" fill="#ffffff"/><path d="M25.5 531 L28 528.5 V531 Z" fill="#ffffff"/></svg>
<svg class="s" style="left:13px;top:555px" width="16" height="13" viewBox="13 555 16 13"><rect x="13" y="558" width="9" height="1" fill="#bdbdbd"/><rect x="13" y="560" width="9" height="1" fill="#bdbdbd"/><rect x="13" y="562" width="9" height="1" fill="#bdbdbd"/><rect x="13" y="564" width="9" height="1" fill="#bdbdbd"/><rect x="22" y="555" width="6" height="10" fill="#ffffff"/><rect x="23" y="557" width="4" height="1" fill="#0d0d0d"/><rect x="23" y="559" width="4" height="1" fill="#0d0d0d"/><rect x="23" y="561" width="4" height="1" fill="#0d0d0d"/><rect x="23" y="563" width="4" height="1" fill="#0d0d0d"/><rect x="17" y="559" width="1.2" height="7" fill="#ffffff"/><rect x="15.5" y="565" width="2.5" height="2" fill="#ffffff"/><path d="M19.5 565 L22 562.5 V565 Z" fill="#ffffff"/><path d="M25.5 565 L28 562.5 V565 Z" fill="#ffffff"/></svg>
<svg class="s" style="left:13px;top:589px" width="16" height="13" viewBox="13 589 16 13"><rect x="13" y="592" width="9" height="1" fill="#bdbdbd"/><rect x="13" y="594" width="9" height="1" fill="#bdbdbd"/><rect x="13" y="596" width="9" height="1" fill="#bdbdbd"/><rect x="13" y="598" width="9" height="1" fill="#bdbdbd"/><rect x="22" y="589" width="6" height="10" fill="#ffffff"/><rect x="23" y="591" width="4" height="1" fill="#0d0d0d"/><rect x="23" y="593" width="4" height="1" fill="#0d0d0d"/><rect x="23" y="595" width="4" height="1" fill="#0d0d0d"/><rect x="23" y="597" width="4" height="1" fill="#0d0d0d"/><rect x="17" y="593" width="1.2" height="7" fill="#ffffff"/><rect x="15.5" y="599" width="2.5" height="2" fill="#ffffff"/><path d="M19.5 599 L22 596.5 V599 Z" fill="#ffffff"/><path d="M25.5 599 L28 596.5 V599 Z" fill="#ffffff"/></svg>
<svg class="s" style="left:13px;top:623px" width="16" height="13" viewBox="13 623 16 13"><rect x="13" y="626" width="9" height="1" fill="#bdbdbd"/><rect x="13" y="628" width="9" height="1" fill="#bdbdbd"/><rect x="13" y="630" width="9" height="1" fill="#bdbdbd"/><rect x="13" y="632" width="9" height="1" fill="#bdbdbd"/><rect x="22" y="623" width="6" height="10" fill="#ffffff"/><rect x="23" y="625" width="4" height="1" fill="#0d0d0d"/><rect x="23" y="627" width="4" height="1" fill="#0d0d0d"/><rect x="23" y="629" width="4" height="1" fill="#0d0d0d"/><rect x="23" y="631" width="4" height="1" fill="#0d0d0d"/><rect x="17" y="627" width="1.2" height="7" fill="#ffffff"/><rect x="15.5" y="633" width="2.5" height="2" fill="#ffffff"/><path d="M19.5 633 L22 630.5 V633 Z" fill="#ffffff"/><path d="M25.5 633 L28 630.5 V633 Z" fill="#ffffff"/></svg>
<svg class="s" style="left:13px;top:657px" width="16" height="13" viewBox="13 657 16 13"><rect x="13" y="660" width="9" height="1" fill="#bdbdbd"/><rect x="13" y="662" width="9" height="1" fill="#bdbdbd"/><rect x="13" y="664" width="9" height="1" fill="#bdbdbd"/><rect x="13" y="666" width="9" height="1" fill="#bdbdbd"/><rect x="22" y="657" width="6" height="10" fill="#ffffff"/><rect x="23" y="659" width="4" height="1" fill="#0d0d0d"/><rect x="23" y="661" width="4" height="1" fill="#0d0d0d"/><rect x="23" y="663" width="4" height="1" fill="#0d0d0d"/><rect x="23" y="665" width="4" height="1" fill="#0d0d0d"/><rect x="17" y="661" width="1.2" height="7" fill="#ffffff"/><rect x="15.5" y="667" width="2.5" height="2" fill="#ffffff"/><path d="M19.5 667 L22 664.5 V667 Z" fill="#ffffff"/><path d="M25.5 667 L28 664.5 V667 Z" fill="#ffffff"/></svg>
<svg class="s" style="left:13px;top:691px" width="16" height="13" viewBox="13 691 16 13"><rect x="13" y="694" width="9" height="1" fill="#bdbdbd"/><rect x="13" y="696" width="9" height="1" fill="#bdbdbd"/><rect x="13" y="698" width="9" height="1" fill="#bdbdbd"/><rect x="13" y="700" width="9" height="1" fill="#bdbdbd"/><rect x="22" y="691" width="6" height="10" fill="#ffffff"/><rect x="23" y="693" width="4" height="1" fill="#0d0d0d"/><rect x="23" y="695" width="4" height="1" fill="#0d0d0d"/><rect x="23" y="697" width="4" height="1" fill="#0d0d0d"/><rect x="23" y="699" width="4" height="1" fill="#0d0d0d"/><rect x="17" y="695" width="1.2" height="7" fill="#ffffff"/><rect x="15.5" y="701" width="2.5" height="2" fill="#ffffff"/><path d="M19.5 701 L22 698.5 V701 Z" fill="#ffffff"/><path d="M25.5 701 L28 698.5 V701 Z" fill="#ffffff"/></svg>
<svg class="s" style="left:716px;top:130px" width="16" height="17" viewBox="716 130 16 17" fill="none" stroke="#f2f2f2" stroke-width="1.2" stroke-linejoin="round" stroke-linecap="round"><path d="M718.5 133.5 H726.0 L728.5 136.0 V145.5 H718.5 Z"/><path d="M725.5 133.8 V136.5 H728.3"/></svg>
<svg class="s" style="left:716px;top:155px" width="16" height="17" viewBox="716 155 16 17" fill="none" stroke="#f2f2f2" stroke-width="1.2" stroke-linejoin="round" stroke-linecap="round"><path d="M718.5 158.5 H726.0 L728.5 161.0 V170.5 H718.5 Z"/><path d="M725.5 158.8 V161.5 H728.3"/></svg>
<svg class="s" style="left:716px;top:180px" width="16" height="17" viewBox="716 180 16 17" fill="none" stroke="#f2f2f2" stroke-width="1.2" stroke-linejoin="round" stroke-linecap="round"><path d="M718.5 183.5 H726.0 L728.5 186.0 V195.5 H718.5 Z"/><path d="M725.5 183.8 V186.5 H728.3"/></svg>
<svg class="s" style="left:716px;top:205px" width="16" height="17" viewBox="716 205 16 17" fill="none" stroke="#f2f2f2" stroke-width="1.2" stroke-linejoin="round" stroke-linecap="round"><path d="M718.5 208.5 H726.0 L728.5 211.0 V220.5 H718.5 Z"/><path d="M725.5 208.8 V211.5 H728.3"/></svg>
<svg class="s" style="left:716px;top:230px" width="16" height="17" viewBox="716 230 16 17" fill="none" stroke="#f2f2f2" stroke-width="1.2" stroke-linejoin="round" stroke-linecap="round"><path d="M718.5 233.5 H726.0 L728.5 236.0 V245.5 H718.5 Z"/><path d="M725.5 233.8 V236.5 H728.3"/></svg>
<svg class="s" style="left:716px;top:255px" width="16" height="17" viewBox="716 255 16 17" fill="none" stroke="#f2f2f2" stroke-width="1.2" stroke-linejoin="round" stroke-linecap="round"><path d="M718.5 258.5 H726.0 L728.5 261.0 V270.5 H718.5 Z"/><path d="M725.5 258.8 V261.5 H728.3"/></svg>
<svg class="s" style="left:716px;top:280px" width="16" height="17" viewBox="716 280 16 17" fill="none" stroke="#f2f2f2" stroke-width="1.2" stroke-linejoin="round" stroke-linecap="round"><path d="M718.5 283.5 H726.0 L728.5 286.0 V295.5 H718.5 Z"/><path d="M725.5 283.8 V286.5 H728.3"/></svg>
<svg class="s" style="left:716px;top:305px" width="16" height="17" viewBox="716 305 16 17" fill="none" stroke="#f2f2f2" stroke-width="1.2" stroke-linejoin="round" stroke-linecap="round"><path d="M718.5 308.5 H726.0 L728.5 311.0 V320.5 H718.5 Z"/><path d="M725.5 308.8 V311.5 H728.3"/></svg>
<svg class="s" style="left:716px;top:330px" width="16" height="17" viewBox="716 330 16 17" fill="none" stroke="#f2f2f2" stroke-width="1.2" stroke-linejoin="round" stroke-linecap="round"><path d="M718.5 333.5 H726.0 L728.5 336.0 V345.5 H718.5 Z"/><path d="M725.5 333.8 V336.5 H728.3"/></svg>
<svg class="s" style="left:716px;top:355px" width="16" height="17" viewBox="716 355 16 17" fill="none" stroke="#f2f2f2" stroke-width="1.2" stroke-linejoin="round" stroke-linecap="round"><path d="M718.5 358.5 H726.0 L728.5 361.0 V370.5 H718.5 Z"/><path d="M725.5 358.8 V361.5 H728.3"/></svg>
<svg class="s" style="left:716px;top:405px" width="16" height="17" viewBox="716 405 16 17" fill="none" stroke="#f2f2f2" stroke-width="1.2" stroke-linejoin="round" stroke-linecap="round"><path d="M718.5 408.5 H726.0 L728.5 411.0 V420.5 H718.5 Z"/><path d="M725.5 408.8 V411.5 H728.3"/></svg>
<svg class="s" style="left:716px;top:430px" width="16" height="17" viewBox="716 430 16 17" fill="none" stroke="#f2f2f2" stroke-width="1.2" stroke-linejoin="round" stroke-linecap="round"><path d="M718.5 433.5 H726.0 L728.5 436.0 V445.5 H718.5 Z"/><path d="M725.5 433.8 V436.5 H728.3"/></svg>
<svg class="s" style="left:716px;top:455px" width="16" height="17" viewBox="716 455 16 17" fill="none" stroke="#f2f2f2" stroke-width="1.2" stroke-linejoin="round" stroke-linecap="round"><path d="M718.5 458.5 H726.0 L728.5 461.0 V470.5 H718.5 Z"/><path d="M725.5 458.8 V461.5 H728.3"/></svg>
<svg class="s" style="left:716px;top:480px" width="16" height="17" viewBox="716 480 16 17" fill="none" stroke="#f2f2f2" stroke-width="1.2" stroke-linejoin="round" stroke-linecap="round"><path d="M718.5 483.5 H726.0 L728.5 486.0 V495.5 H718.5 Z"/><path d="M725.5 483.8 V486.5 H728.3"/></svg>
<svg class="s" style="left:716px;top:505px" width="16" height="17" viewBox="716 505 16 17" fill="none" stroke="#f2f2f2" stroke-width="1.2" stroke-linejoin="round" stroke-linecap="round"><path d="M718.5 508.5 H726.0 L728.5 511.0 V520.5 H718.5 Z"/><path d="M725.5 508.8 V511.5 H728.3"/></svg>
<svg class="s" style="left:716px;top:530px" width="16" height="17" viewBox="716 530 16 17" fill="none" stroke="#f2f2f2" stroke-width="1.2" stroke-linejoin="round" stroke-linecap="round"><path d="M718.5 533.5 H726.0 L728.5 536.0 V545.5 H718.5 Z"/><path d="M725.5 533.8 V536.5 H728.3"/></svg>
<svg class="s" style="left:716px;top:555px" width="16" height="17" viewBox="716 555 16 17" fill="none" stroke="#f2f2f2" stroke-width="1.2" stroke-linejoin="round" stroke-linecap="round"><path d="M718.5 558.5 H726.0 L728.5 561.0 V570.5 H718.5 Z"/><path d="M725.5 558.8 V561.5 H728.3"/></svg>
</body></html>
